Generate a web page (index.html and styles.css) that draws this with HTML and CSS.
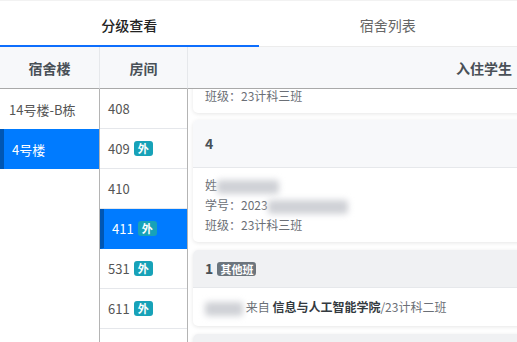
FILE: index.html
```html
<!DOCTYPE html>
<html>
<head>
  <meta charset="UTF-8">
  <meta name="viewport" content="width=device-width, initial-scale=1.0">
  <link rel="stylesheet" href="styles.css">
</head>
<body>
<div class="tabs">
  <div class="tab active">分级查看</div>
  <div class="tab">宿舍列表</div>
</div>
<div class="panel">
  <div class="col col-bld">
    <div class="col-head">宿舍楼</div>
    <div class="col-body">
      <div class="item">14号楼-B栋</div>
      <div class="item active">4号楼</div>
    </div>
  </div>
  <div class="col col-room">
    <div class="col-head">房间</div>
    <div class="col-body">
      <div class="item row">408</div>
      <div class="item row">409 <span class="badge out">外</span></div>
      <div class="item row">410</div>
      <div class="item row active">411 <span class="badge out">外</span></div>
      <div class="item row">531 <span class="badge out">外</span></div>
      <div class="item row">611 <span class="badge out">外</span></div>
    </div>
  </div>
  <div class="col col-stu">
    <div class="col-head right">入住学生</div>
    <div class="col-body cards">
      <!-- scrolled past: only the last line shows -->
      <div class="card first">
        <div class="card-head tall"></div>
        <div class="card-body">
          <div class="line"></div>
          <div class="line"></div>
          <div class="line">班级：23计科三班</div>
        </div>
      </div>
      <div class="card">
        <div class="card-head tall">4</div>
        <div class="card-body">
          <div class="line">姓<span class="blur w60"></span></div>
          <div class="line">学号：2023<span class="blur w80"></span></div>
          <div class="line">班级：23计科三班</div>
        </div>
      </div>
      <div class="card other">
        <div class="card-head">1 <span class="badge grey">其他班</span></div>
        <div class="card-body">
          <div class="line"><span class="blur w40"></span> 来自 <b>信息与人工智能学院</b>/23计科二班</div>
        </div>
      </div>
      <div class="card other">
        <div class="card-head empty"></div>
      </div>
    </div>
  </div>
</div>
</body>
</html>
```
FILE: styles.css
```css
body {
  margin: 0;
  font-family: "Noto Sans CJK SC", "Noto Sans", sans-serif;
  color: #495057;
  background: #fff;
  overflow: hidden;
}

.tabs {
  display: flex;
  height: 47px;
  border-top: 1px solid #f2f2f2;
  box-sizing: border-box;
}
.tab {
  flex: 1;
  display: flex;
  align-items: center;
  justify-content: center;
  font-size: 14px;
  color: #666;
  border-bottom: 1px solid #ececec;
  padding-top: 2px;
}
.tab.active {
  color: #222;
  font-weight: 500;
  border-bottom: 2px solid #0d6efd;
  padding-top: 3px;
}

.panel {
  display: grid;
  grid-template-columns: 100px 88px 1fr;
  height: 295px;
}
.col {
  display: flex;
  flex-direction: column;
  min-width: 0;
  overflow: hidden;
}
.col-head {
  height: 41px;
  flex: none;
  display: flex;
  align-items: center;
  justify-content: center;
  background: #f7f8fa;
  font-size: 14px;
  font-weight: bold;
  color: #495057;
  border-bottom: 1px solid #a9a9a9;
  border-right: 1px solid #e6e8eb;
}
.col-head.right {
  justify-content: flex-end;
  padding-right: 5px;
  border-right: none;
}
.col-body {
  flex: 1;
  overflow: hidden;
  border-right: 1px solid #b4b4b4;
}
.col-stu .col-body {
  border-right: none;
}

.item {
  height: 40px;
  box-sizing: border-box;
  display: flex;
  align-items: center;
  padding-left: 9px;
  font-size: 13px;
  color: #555;
}
.item.row {
  padding-left: 8px;
  border-bottom: 1px solid #e5e7eb;
}
.item.active {
  background: #007bff;
  color: #fff;
  border-left: 4px solid #0056b3;
  padding-left: 8px;
}
.item.row.active {
  border-bottom-color: #007bff;
}

.badge {
  display: inline-block;
  margin-left: 4px;
  padding: 0 3px;
  height: 15px;
  line-height: 15px;
  border-radius: 3px;
  font-size: 11px;
  font-weight: bold;
  color: #fff;
}
.badge.out {
  background: #17a2b8;
  padding: 0 4px;
}
.badge.grey {
  background: #6c757d;
  margin-left: 1px;
  height: 14px;
  line-height: 14px;
}

.cards {
  padding: 0 0 0 5px;
}
.card {
  margin: 0 -10px 8px 0;
  border-radius: 5px;
  background: #fff;
  box-shadow: 0 1px 4px rgba(0, 0, 0, 0.1);
  overflow: hidden;
}
.card.first {
  margin-top: -98px;
  margin-bottom: 7px;
}
.card-head {
  padding: 10px 12px;
  line-height: 17px;
  min-height: 17px;
  background: #f0f1f3;
  font-size: 14px;
  font-weight: bold;
  color: #495057;
  border-bottom: 1px solid #e6e8eb;
}
.card-head.tall {
  padding: 15px 12px;
  background: #f7f8fa;
}
.card-body {
  padding: 7px 12px;
  font-size: 12px;
  color: #6b6f76;
}
.card.other .card-body {
  padding: 10px 12px;
}
.line {
  line-height: 20px;
  min-height: 20px;
  white-space: nowrap;
}
.card.other .line {
  line-height: 17px;
  min-height: 17px;
}
.line b {
  color: #343a40;
}

.blur {
  display: inline-block;
  height: 14px;
  vertical-align: middle;
  background: #cfd1d6;
  filter: blur(3px);
  border-radius: 3px;
}
.w40 { width: 38px; }
.w60 { width: 62px; }
.w80 { width: 80px; }
```
